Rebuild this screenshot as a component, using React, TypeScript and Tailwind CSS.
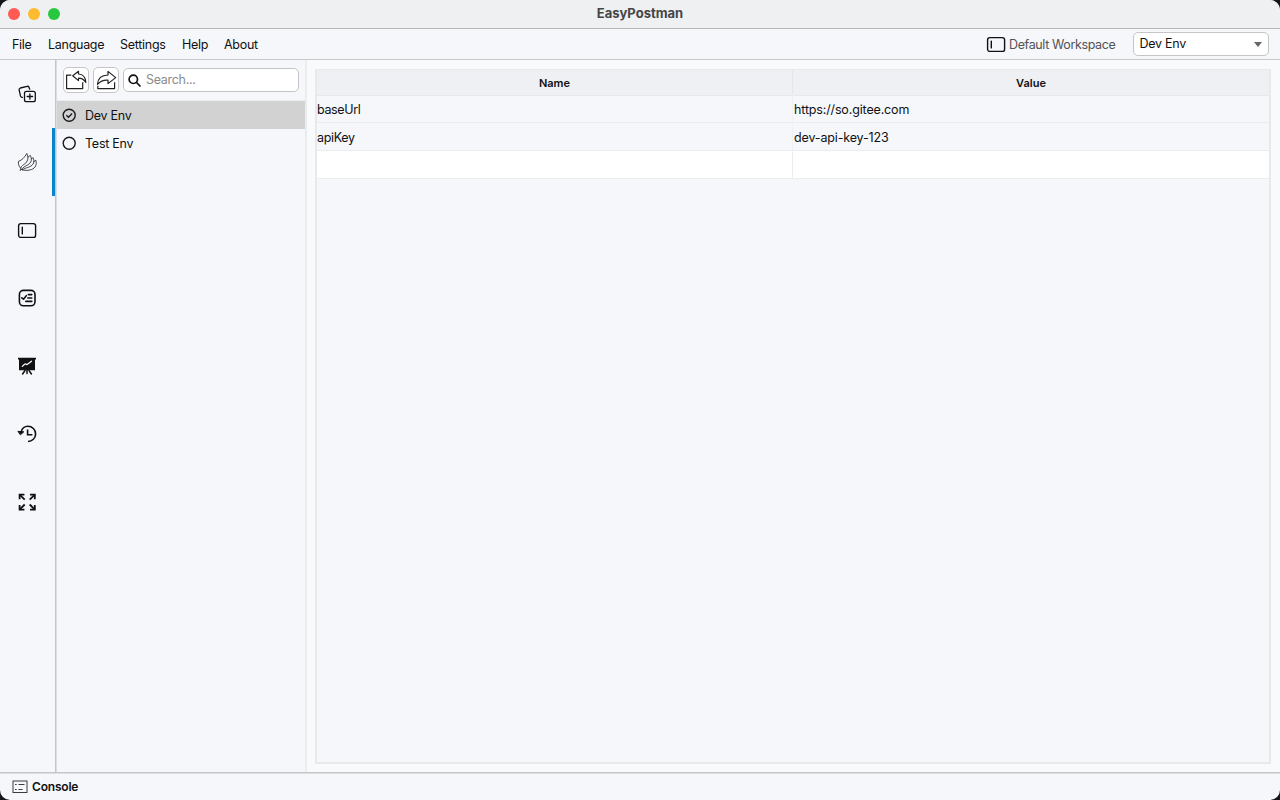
import { ReactNode } from "react";

const menus = [
    { label: "File", width: "w-[36px]" },
    { label: "Language", width: "w-[72px]" },
    { label: "Settings", width: "w-[62px]" },
    { label: "Help", width: "w-[42px]" },
    { label: "About", width: "w-[50px]" },
];

const environments = [
    { name: "Dev Env", active: true },
    { name: "Test Env", active: false },
];

const variables = [
    { name: "baseUrl", value: "https://so.gitee.com" },
    { name: "apiKey", value: "dev-api-key-123" },
];

const Icon = ({ children, size = 20, stroke = 1.4 }: { children: ReactNode; size?: number; stroke?: number }) => (
    <svg
        width={size}
        height={size}
        viewBox="0 0 20 20"
        fill="none"
        stroke="currentColor"
        strokeWidth={stroke}
        strokeLinecap="round"
        strokeLinejoin="round"
        className="shrink-0"
    >
        {children}
    </svg>
);

const CollectionsIcon = () => (
    <Icon stroke={1.3}>
        <path d="M5.4 13.5 4.5 13.2Q3.8 12.8 3.5 11.9L2.1 5.8Q1.9 4.4 3.3 4L10.2 2.3Q11.5 2 12 3.2L12.7 5.2" />
        <rect x="7.5" y="7.3" width="10.8" height="10.4" rx="2" />
        <path d="M12.9 9.8v5.4M10.2 12.5h5.4" />
    </Icon>
);

const EnvironmentsIcon = () => (
    <Icon stroke={0.75}>
        <path d="M3.7 16.3C1.6 14 1 11.6 1.5 9.3 5 8.3 7.6 5.3 9.8 1.5 11.6 5.2 11.2 8.4 8.6 11.2 6.3 13.2 4.4 13.6 3.7 16.3L3.2 18.6" />
        <path d="M11 5.2 13.3 3.4C15.4 7.6 14.4 10.6 10.9 12.8 7.8 14.6 6 15.2 4.6 17.6" />
        <path d="M14.5 7 15.9 5.6C18 9.6 16.6 13 12.5 14.8 9.5 16 7 16.4 5.3 18" />
        <path d="M16.8 9.6 18.8 8.2C20 12.5 18.6 16 14.5 17.5 11 18.8 7.4 18.6 4.6 17.6" />
    </Icon>
);

const WorkspaceIcon = () => (
    <Icon stroke={1.4}>
        <rect x="1.6" y="3.6" width="17" height="13.8" rx="2.2" />
        <path d="M5.3 7.1v6.8" />
    </Icon>
);

const FunctionalIcon = () => (
    <Icon stroke={1.6}>
        <rect x="2.4" y="2.4" width="15.6" height="15.4" rx="4" />
        <path d="M4.8 9.8 6.5 11.2 9.3 7.7M11.3 6.6h3.5M10.8 10h4M8.8 13.4h6" />
    </Icon>
);

const PerformanceIcon = () => (
    <Icon stroke={1.5}>
        <path d="M1 1.8h18v1.6h-1V14.2H2V3.4H1z" fill="currentColor" stroke="none" />
        <path d="M10 14v3.6M8 14.5 5.6 18M12 14.5l2.4 3.5" />
        <path d="M5.3 10.4 7.6 8.2Q8.3 7.6 9 8.2 9.8 8.9 10.8 8L14.5 5.2" stroke="#f5f7fb" strokeWidth={1.3} />
    </Icon>
);

const HistoryIcon = () => (
    <Icon stroke={1.6}>
        <path d="M4 8.2C5 4.2 7.8 2.3 11 2.3a7.6 7.6 0 0 1 0 15.2" strokeLinecap="butt" />
        <path d="M10.6 5.4v5.3h4.8" strokeLinecap="butt" strokeLinejoin="miter" />
        <path d="M1.3 7.4 6.8 7.8 3.7 10.6z" fill="currentColor" strokeWidth={1} />
    </Icon>
);

const ExpandIcon = () => (
    <Icon stroke={1.8}>
        <g strokeLinecap="butt" strokeLinejoin="miter">
            <path d="M2.6 7.2V2.6H7.4M13 2.6h4.8v4.6M17.8 13v4.6H13M7.4 17.6H2.6V13" />
            <path d="M2.6 2.6 7.7 7.7M17.8 2.6l-5.1 5.1M17.8 17.6l-5.1-5.1M2.6 17.6 7.7 12.5" />
        </g>
    </Icon>
);

const tabs = [
    { id: "collections", icon: <CollectionsIcon /> },
    { id: "environments", icon: <EnvironmentsIcon />, active: true },
    { id: "workspaces", icon: <WorkspaceIcon /> },
    { id: "functional", icon: <FunctionalIcon /> },
    { id: "performance", icon: <PerformanceIcon /> },
    { id: "history", icon: <HistoryIcon /> },
    { id: "expand", icon: <ExpandIcon /> },
];

const ToolButton = ({ children }: { children: ReactNode }) => (
    <button className="flex h-[26px] w-[26px] shrink-0 items-center justify-center rounded-[5px] border border-[#c5c5c7] bg-white">
        <svg width="22" height="22" viewBox="0 0 22 22" fill="none" stroke="#222" strokeWidth="1.2" strokeLinejoin="round">
            {children}
        </svg>
    </button>
);

const TitleBar = () => (
    <div className="relative flex h-[29px] shrink-0 items-center justify-center border-b border-[#b5b6b8] bg-[#eff0f2]">
        <div className="absolute left-2 top-2 flex gap-2">
            <span className="h-3 w-3 rounded-full bg-[#ff5b54]" />
            <span className="h-3 w-3 rounded-full bg-[#febb2d]" />
            <span className="h-3 w-3 rounded-full bg-[#27c83f]" />
        </div>
        <span className="text-[13px] font-bold text-[#444547]">EasyPostman</span>
    </div>
);

const MenuBar = () => (
    <div className="flex h-[31px] shrink-0 items-center border-b border-[#c6c8ca] pl-3 pr-[11px]">
        {menus.map((menu) => (
            <span key={menu.label} className={`${menu.width} shrink-0 whitespace-nowrap pt-0.5 tracking-[-0.28px]`}>
                {menu.label}
            </span>
        ))}
        <div className="ml-auto flex items-center">
            <WorkspaceIcon />
            <span className="ml-[3px] w-[124px] whitespace-nowrap pt-0.5 tracking-[-0.37px] text-[#525355]">Default Workspace</span>
            <div className="flex h-6 w-[136px] items-center justify-between rounded-[5px] border border-[#c5c5c7] bg-white pl-[5.5px] pr-1.5">
                <span className="pt-px tracking-[-0.25px]">Dev Env</span>
                <span className="border-x-[4.5px] border-t-[5px] border-x-transparent border-t-[#666]" />
            </div>
        </div>
    </div>
);

const Sidebar = () => (
    <div className="flex w-[57px] shrink-0 flex-col border-r border-[#dcdddf]">
        <div className="flex flex-1 flex-col border-r border-[#c4c5c7]">
            {tabs.map((tab) => (
                <div
                    key={tab.id}
                    className={`flex h-[68px] items-center justify-center border-r-[3px] pl-0.5 text-[#111] ${tab.active ? "border-[#0a84cc]" : "border-transparent"}`}
                >
                    {tab.icon}
                </div>
            ))}
        </div>
    </div>
);

const EnvironmentPanel = () => (
    <div className="flex w-[250px] shrink-0 flex-col border-r-2 border-[#ebecee]">
        <div className="flex h-[41px] items-center gap-1 border-b border-[#ebecee] px-1.5">
            <ToolButton>
                <path d="M6.3 6.2H1.6V19.6H17.7V13.2" />
                <path d="M7.7 6.8 13.5 2.3V5C17.6 5.2 20.4 7.6 20.8 13.3 18.8 10.4 16.8 9.2 13.5 9.2V11.6Z" />
            </ToolButton>
            <ToolButton>
                <path d="M2.8 16.8V19.6H19.6V13.2" />
                <path d="M13 2.4 20.7 8.6 13 14.6V11.2C8.4 10.8 5.3 12.2 2.5 15.3 2.8 10 6.2 6.2 13 6Z" />
            </ToolButton>
            <div className="flex h-6 w-[176px] items-center rounded-[5px] border border-[#c5c5c7] bg-white pl-1">
                <svg width="13" height="13" viewBox="0 0 13 13" fill="none" stroke="#111" strokeWidth="1.7" strokeLinecap="round">
                    <circle cx="5.3" cy="5.3" r="4.2" />
                    <path d="M8.5 8.5 12 12" />
                </svg>
                <span className="ml-[5px] pt-px tracking-[-0.3px] text-[#8b8b8b]">Search...</span>
            </div>
        </div>
        {environments.map((env) => (
            <div
                key={env.name}
                className={`flex h-7 items-center pl-1 ${env.active ? "bg-[#d2d2d2]" : ""}`}
            >
                <svg width="16" height="16" viewBox="0 0 16 16" fill="none" stroke="#1d1a20" strokeWidth="1.4">
                    <circle cx="8.2" cy="8.2" r="6" />
                    {env.active && <path d="M5.3 8.3 7.5 10.2 11.1 6.5" />}
                </svg>
                <span className="ml-2 pt-0.5 tracking-[-0.25px]">{env.name}</span>
            </div>
        ))}
    </div>
);

const VariableTable = () => (
    <div className="flex min-w-0 flex-1 bg-[#f9fafc] pb-2 pl-2 pr-[9px] pt-[9px]">
        <div className="flex-1 border-2 border-t border-[#e8e9ea] bg-[#f5f7fb]">
            <div className="grid h-[25px] grid-cols-[476px_1fr] bg-[#eff0f4] text-center text-[11px] font-semibold leading-[26px] shadow-[0_1px_0_#e8e9e9]">
                <div className="border-r border-[#e4e5e6]">Name</div>
                <div>Value</div>
            </div>
            {variables.map((row) => (
                <div key={row.name} className="grid h-7 grid-cols-[476px_1fr] border-b border-[#ebeced] leading-[29px]">
                    <div className="border-r border-[#f0f1f3] tracking-[-0.35px]">{row.name}</div>
                    <div className="pl-px tracking-[-0.15px]">{row.value}</div>
                </div>
            ))}
            <div className="grid h-7 grid-cols-[476px_1fr] border-b border-[#ebeced] bg-white">
                <div className="border-r border-[#ebeced]" />
                <div />
            </div>
        </div>
    </div>
);

const StatusBar = () => (
    <div className="flex h-7 shrink-0 items-center border-t border-[#c4c5c6] pl-3 shadow-[inset_0_1px_0_#dedfe1]">
        <svg width="16" height="14" viewBox="0 0 16 14" fill="none" stroke="#3c3c3e">
            <rect x="1" y="1" width="14" height="11.5" />
            <path d="M3 4.5h1.7M6.5 4.5h6M3 9.5h1.7M6.5 9.5h4" />
        </svg>
        <span className="ml-1 text-[12px] font-semibold tracking-[-0.2px]">Console</span>
    </div>
);

export default function App() {
    return (
        <div className="h-[800px] w-[1280px] overflow-hidden bg-[#15151c]">
            <div className="flex h-full flex-col overflow-hidden rounded-[10px] bg-[#f5f7fb] font-['Inter','Liberation_Sans',sans-serif] text-[12.5px] text-[#111]">
                <TitleBar />
                <MenuBar />
                <div className="flex min-h-0 flex-1">
                    <Sidebar />
                    <EnvironmentPanel />
                    <VariableTable />
                </div>
                <StatusBar />
            </div>
        </div>
    );
}
